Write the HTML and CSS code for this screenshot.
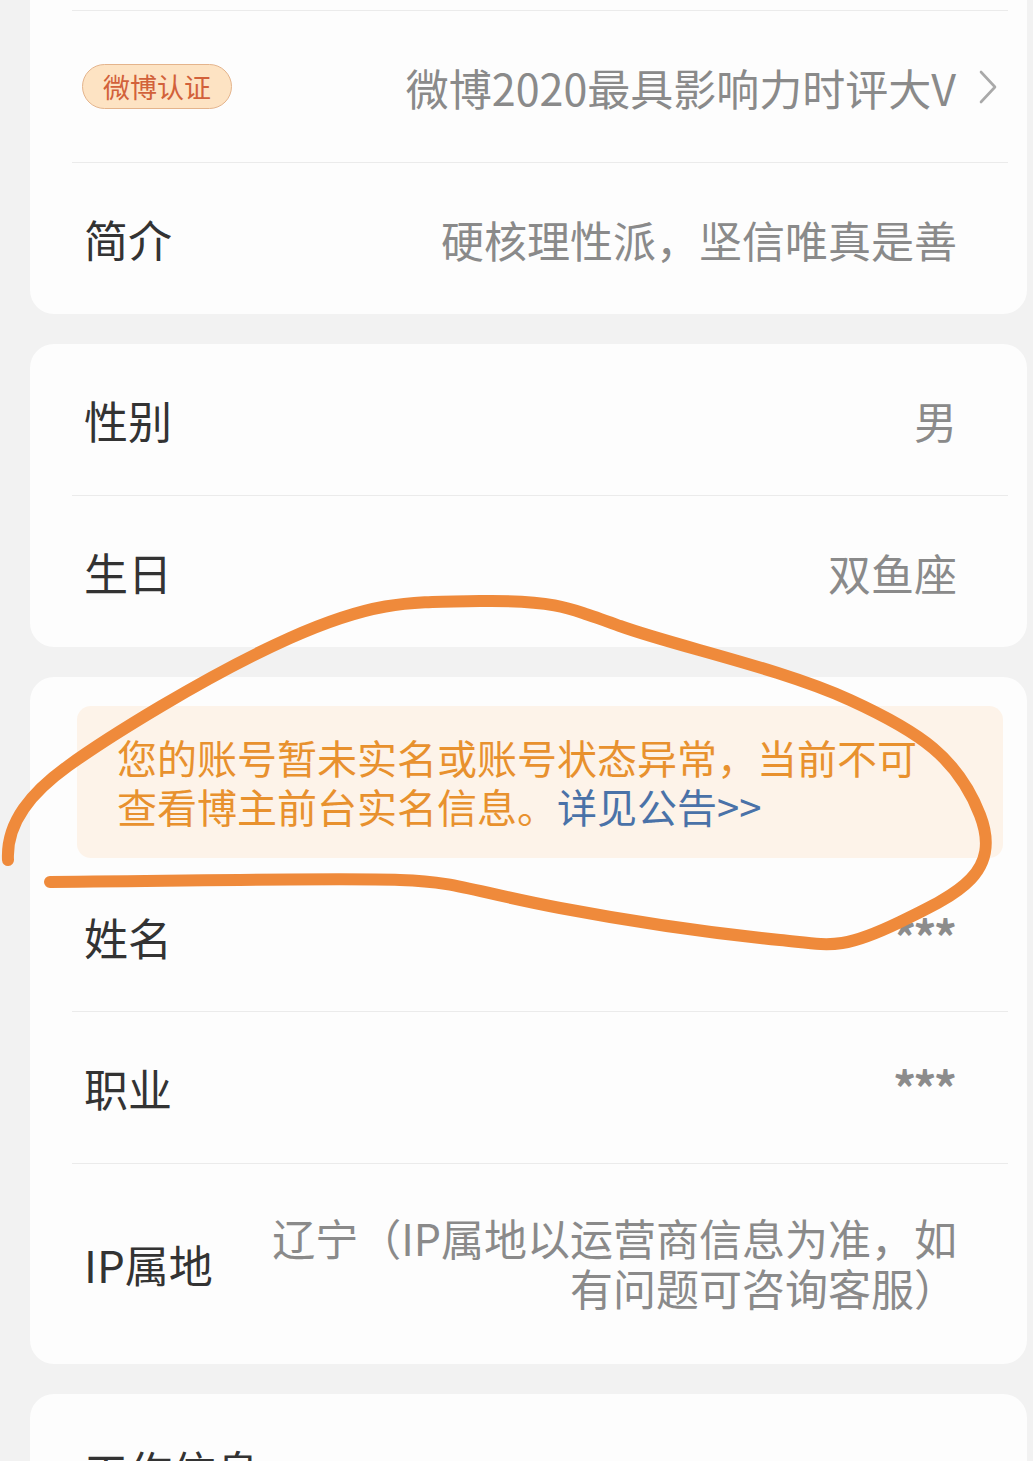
FILE: index.html
```html
<!DOCTYPE html>
<html lang="zh-CN">
<head>
    <meta charset="UTF-8">
    <meta name="viewport" content="width=device-width, initial-scale=1.0">
    <title>基本资料</title>
    <link rel="stylesheet" href="styles.css">
</head>
<body>
    <main class="page">
        <section class="card card-first">
            <div class="row"></div>
            <div class="row">
                <span class="badge">微博认证</span>
                <span class="value">微博2020最具影响力时评大V</span>
                <svg class="chevron" width="18" height="34" viewBox="0 0 18 34">
                    <polyline points="2,2 16,17 2,32" fill="none" stroke="#a9a9a9" stroke-width="2.6" stroke-linecap="round" stroke-linejoin="round"/>
                </svg>
            </div>
            <div class="row">
                <span class="label">简介</span>
                <span class="value">硬核理性派，坚信唯真是善</span>
            </div>
        </section>

        <section class="card">
            <div class="row">
                <span class="label">性别</span>
                <span class="value">男</span>
            </div>
            <div class="row">
                <span class="label">生日</span>
                <span class="value">双鱼座</span>
            </div>
        </section>

        <section class="card">
            <div class="notice">
                您的账号暂未实名或账号状态异常，当前不可查看博主前台实名信息。<a class="notice-link" href="#">详见公告&gt;&gt;</a>
            </div>
            <div class="row row-name">
                <span class="label">姓名</span>
                <span class="value stars">***</span>
            </div>
            <div class="row">
                <span class="label">职业</span>
                <span class="value stars">***</span>
            </div>
            <div class="row row-tall">
                <span class="label">IP属地</span>
                <span class="value value-wrap">辽宁（IP属地以运营商信息为准，如有问题可咨询客服）</span>
            </div>
        </section>

        <section class="card">
            <div class="row">
                <span class="label">工作信息</span>
                <span class="value"></span>
            </div>
        </section>
    </main>

    <!-- 手绘圈注 -->
    <svg class="scribble" width="1033" height="1461" viewBox="0 0 1033 1461">
        <path d="M8 860 C6 822 32 792 68 766 S205 676 290 638 S410 602 480 601 S565 606 620 626 S780 668 850 700 S958 758 980 815 S960 893 900 922 S830 945 780 940 S650 925 560 908 S460 882 400 880 S250 880 50 882"
              fill="none" stroke="#ef8a3b" stroke-width="12" stroke-linecap="round" stroke-linejoin="round"/>
    </svg>
</body>
</html>
```

FILE: styles.css
```css
body {
    margin: 0;
    padding: 0;
    background: #f2f2f2;
    font-family: "Noto Sans CJK SC", "Noto Sans", sans-serif;
    position: relative;
    overflow: hidden;
    height: 1461px;
}

.page {
    padding: 0 6px 0 30px;
}

.card {
    background: #fdfdfd;
    border-radius: 24px;
    margin-bottom: 30px;
    overflow: hidden;
}

.card-first {
    margin-top: -141px;
}

.row {
    display: flex;
    align-items: center;
    height: 151px;
    margin: 0 19px 0 42px;
    padding: 0 51px 0 12px;
    border-bottom: 1px solid #ebebeb;
}

.row:last-child {
    border-bottom: none;
}

.row-name {
    height: 149px;
    margin-top: 4px;
}

.row-tall {
    height: 200px;
}

.label {
    flex-shrink: 0;
    font-size: 44px;
    color: #333;
}

.value {
    margin-left: auto;
    font-size: 43px;
    color: #8a8a8a;
    text-align: right;
}

.value-wrap {
    max-width: 700px;
    line-height: 50px;
    margin-top: -4px;
}

.stars {
    font-size: 46px;
    font-weight: bold;
    color: #8c8c8c;
    letter-spacing: -3px;
    margin-top: -4px;
    margin-right: 3px;
}

.badge {
    margin-left: -2px;
    padding: 0 20px;
    height: 43px;
    line-height: 43px;
    font-size: 27px;
    color: #d2613a;
    background: #fde3c3;
    border: 1px solid #e4b48c;
    border-radius: 23px;
}

.chevron {
    margin-left: 23px;
    margin-right: -40px;
    flex-shrink: 0;
}

.notice {
    margin: 29px 24px 0 47px;
    padding: 27px 70px 27px 40px;
    background: #fdf3e9;
    border-radius: 14px;
    font-size: 40px;
    line-height: 49px;
    color: #e8912e;
}

.notice-link {
    color: #4a72a8;
    text-decoration: none;
}

.scribble {
    position: absolute;
    top: 0;
    left: 0;
    pointer-events: none;
}
```
